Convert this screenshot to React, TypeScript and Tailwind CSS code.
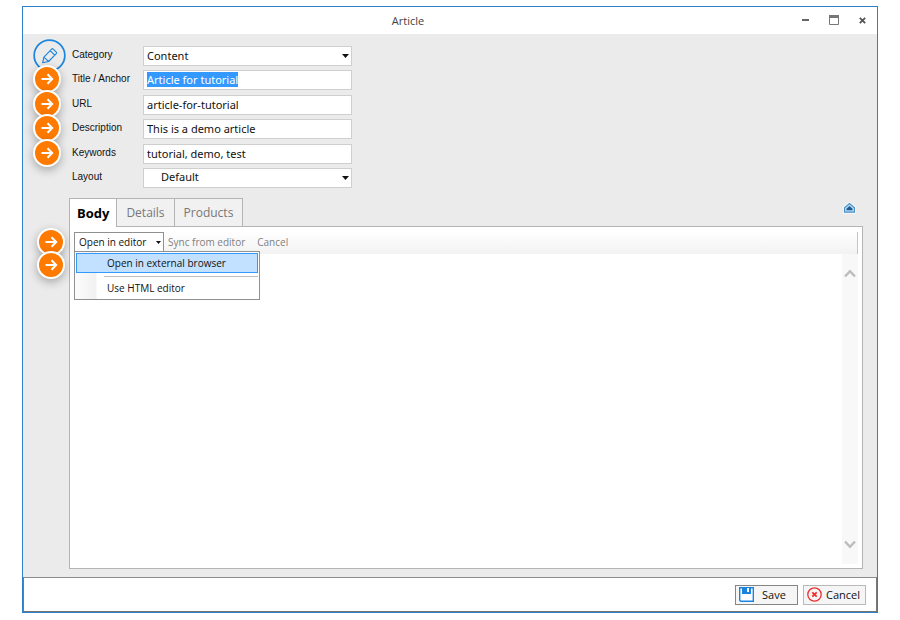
import { type ReactNode, useEffect, useRef, useState } from 'react';

const fieldCls =
  'block w-full h-5 px-[3px] pb-px bg-white border border-[#cfcfcf] font-["Noto_Sans",sans-serif] text-[11px] leading-4 text-[#111] outline-none selection:bg-[#3399ff] selection:text-white';

const toolCls = 'h-5 pl-1 pr-2 text-[10px] leading-4';

interface FieldProps {
  id: string;
  label: string;
  marked?: boolean;
  children: ReactNode;
}

function Marker() {
  return (
    <span className="flex w-7 h-7 items-center justify-center rounded-full border-2 border-white bg-[#ff7a00] shadow-[0_3px_10px_rgba(0,0,0,0.3)]">
      <svg width="14" height="14" viewBox="0 0 14 14" fill="none" stroke="#fff" strokeWidth="2" aria-hidden="true">
        <path d="M1.5 7H12M7.5 2.2L12.2 7L7.5 11.8" />
      </svg>
    </span>
  );
}

function Caret({ className }: { className: string }) {
  return (
    <svg className={className} width="7" height="4" viewBox="0 0 7 4" fill="#111" aria-hidden="true">
      <path d="M0 0H7L3.5 4Z" />
    </svg>
  );
}

function Field({ id, label, marked, children }: FieldProps) {
  return (
    <div className="relative flex items-center">
      {marked && (
        <div className="absolute -left-[39px] -top-[5px]">
          <Marker />
        </div>
      )}
      <label htmlFor={id} className="w-[71px] shrink-0 pb-[2px] text-[10px] leading-4 text-[#111] font-['Liberation_Sans',Arial,sans-serif]">
        {label}
      </label>
      <div className="relative flex-1">{children}</div>
    </div>
  );
}

function Chevron({ up }: { up?: boolean }) {
  return (
    <svg width="12" height="9" viewBox="0 0 12 9" fill="none" stroke="#bcbcbc" strokeWidth="2.4" aria-hidden="true">
      <path d={up ? 'M1 7.5L6 2.2L11 7.5' : 'M1 1.5L6 6.8L11 1.5'} />
    </svg>
  );
}

export default function App() {
  const titleRef = useRef<HTMLInputElement>(null);
  const [tab, setTab] = useState('Body');
  const [menuOpen, setMenuOpen] = useState(true);

  useEffect(() => {
    titleRef.current?.focus();
    titleRef.current?.select();
  }, []);

  return (
    <div className="h-screen bg-white pt-[6px] pb-[7px] pl-[22px] pr-[22px] font-['Open_Sans',sans-serif] text-[#222]">
      <div className="flex h-full flex-col border border-[#2f7fcb] bg-[#ebebeb]">
        <header className="relative flex h-[27px] shrink-0 items-center justify-center bg-white">
          <h1 className="mr-[84px] text-[11px] leading-4 text-[#444]">Article</h1>
          <div className="absolute right-2 top-[7px] flex gap-4">
            <button type="button" aria-label="Minimize" className="flex w-3 h-3 items-center">
              <svg width="8" height="12" viewBox="0 0 8 12"><path d="M1 5H8V7H1Z" fill="#666" /></svg>
            </button>
            <button type="button" aria-label="Maximize" className="flex w-3 h-3 items-center">
              <svg className="shrink-0" width="10" height="10" viewBox="0 0 10 10">
                <path d="M.5 .5H9.5V9.5H.5Z" fill="#fff" stroke="#777" />
                <path d="M0 0H10V3H0Z" fill="#777" />
              </svg>
            </button>
            <button type="button" aria-label="Close" className="flex w-3 h-3 items-center">
              <svg className="ml-[2px]" width="7" height="7" viewBox="0 0 7 7"><path d="M.8 .8L6.2 6.2M6.2 .8L.8 6.2" stroke="#555" strokeWidth="1.8" /></svg>
            </button>
          </div>
        </header>

        <main className="relative flex min-h-0 flex-1 flex-col pt-3 pb-2 pl-[46px] pr-[14px]">
          <div className="absolute left-[10px] top-[5px] text-[#1e86de]">
            <svg width="33" height="33" viewBox="0 0 34 34" fill="none" stroke="currentColor" aria-hidden="true">
              <circle cx="17" cy="17" r="15.8" strokeWidth="1.8" />
              <path d="M10 24.5L11.2 18.6L19.2 10.4Q20 9.6 20.8 10.4L24 13.5Q24.8 14.3 24 15.1L16 23.2Z M17.7 12L22.4 16.7M11.2 18.6L13.5 20.8L16 23.2" strokeWidth="1.2" strokeLinejoin="round" />
            </svg>
          </div>

          <form className="ml-[3px] flex h-[142px] w-[280px] shrink-0 flex-col justify-between" onSubmit={e => e.preventDefault()}>
            <Field id="category" label="Category">
              <select id="category" className={`${fieldCls} appearance-none`}>
                <option>Content</option>
              </select>
              <Caret className="pointer-events-none absolute right-[3px] top-2" />
            </Field>
            <Field id="title" label="Title / Anchor" marked>
              <input id="title" ref={titleRef} type="text" defaultValue="Article for tutorial" className={fieldCls} />
            </Field>
            <Field id="url" label="URL" marked>
              <input id="url" type="text" defaultValue="article-for-tutorial" className={fieldCls} />
            </Field>
            <Field id="description" label="Description" marked>
              <input id="description" type="text" defaultValue="This is a demo article" className={fieldCls} />
            </Field>
            <Field id="keywords" label="Keywords" marked>
              <input id="keywords" type="text" defaultValue="tutorial, demo, test" className={fieldCls} />
            </Field>
            <Field id="layout" label="Layout">
              <select id="layout" className={`${fieldCls} appearance-none indent-[14px]`}>
                <option>Default</option>
              </select>
              <Caret className="pointer-events-none absolute right-[3px] top-2" />
            </Field>
          </form>

          <div className="relative z-10 mt-[10px] flex shrink-0 items-end">
            <div role="tablist" className="-mb-px flex border-l border-t border-[#b4b4b4] leading-4">
              {['Body', 'Details', 'Products'].map(name => (
                <button
                  key={name}
                  type="button"
                  role="tab"
                  aria-selected={tab === name}
                  onClick={() => setTab(name)}
                  className={
                    tab === name
                      ? 'h-7 border-r border-[#b4b4b4] bg-white px-[7px] text-[13px] font-bold text-black'
                      : 'h-7 border-r border-b border-[#b4b4b4] bg-[#f1f1f1] px-[9px] text-[12px] text-[#777]'
                  }
                >
                  {name}
                </button>
              ))}
            </div>
            <button type="button" aria-label="Collapse" className="ml-auto mr-[7px] mb-3">
              <svg width="13" height="12" viewBox="0 0 13 12" aria-hidden="true">
                <path d="M6.5 1.3L12 5.8V10.6H1V5.8Z" fill="#d8ecfa" stroke="#fff" strokeWidth="2" />
                <path d="M6.5 1.5L11.5 5.8V10.2H1.5V5.8Z" fill="#b7daf2" stroke="#4a90c8" strokeWidth="1.2" />
                <path d="M6.5 4L9.5 6.8V8.2H3.5V6.8Z" fill="#1d5a94" />
              </svg>
            </button>
          </div>

          <section className="relative flex min-h-0 flex-1 flex-col border border-[#b4b4b4] bg-white p-1 pt-[5px]">
            <div className="absolute -left-[33px] top-px">
              <Marker />
            </div>
            <div className="absolute -left-[33px] top-6">
              <Marker />
            </div>

            <div className="relative flex h-[22px] shrink-0 items-start border-r border-[#c4c4c4] bg-linear-to-b from-white to-[#f2f2f2] text-[#808080]">
              <button
                type="button"
                aria-haspopup="menu"
                aria-expanded={menuOpen}
                onClick={() => setMenuOpen(!menuOpen)}
                className="flex h-5 w-[90px] items-center justify-between border border-b-0 border-[#909090] bg-white pl-1 pr-[2px] pb-px text-[10px] leading-4 text-[#111]"
              >
                Open in editor
                <svg width="5" height="3" viewBox="0 0 5 3" fill="#111" aria-hidden="true"><path d="M0 0H5L2.5 3Z" /></svg>
              </button>
              <button type="button" className={toolCls}>Sync from editor</button>
              <button type="button" className={toolCls}>Cancel</button>

              {menuOpen && (
                <div role="menu" className="absolute left-0 top-[19px] w-[186px] border border-[#909090] bg-linear-to-r from-[#fcfcfc] from-0% via-[#f1f1f1] via-[21px] to-white to-[22px] p-px text-[10px] leading-4 text-[#111]">
                  <button type="button" role="menuitem" className="block h-5 w-full border border-[#3399ff] bg-[#c2e0ff] pl-[30px] text-left">
                    Open in external browser
                  </button>
                  <hr className="ml-7 mt-[3px] mb-px border-[#bdbdbd]" />
                  <button type="button" role="menuitem" className="block h-5 w-full pl-[31px] text-left">
                    Use HTML editor
                  </button>
                </div>
              )}
            </div>

            <div className="flex min-h-0 flex-1">
              <textarea aria-label="Body" className="min-w-0 flex-1 resize-none p-1 text-[12px] outline-none" />
              <div className="flex w-4 flex-col items-center justify-between bg-[#f8f8f8] pt-[15px] pb-[15px]">
                <button type="button" aria-label="Scroll up"><Chevron up /></button>
                <button type="button" aria-label="Scroll down"><Chevron /></button>
              </div>
            </div>
          </section>
        </main>

        <footer className="flex h-[35px] shrink-0 items-center justify-end gap-[5px] border border-[#777] border-t-[#8c8c8c] bg-white pr-[10px] text-[11px] leading-4 text-[#111]">
          <button type="button" className="flex h-5 w-[63px] items-center border border-[#858585] bg-[#f5f5f5] pl-[3px]">
            <svg className="mr-2" width="15" height="15" viewBox="0 0 15 15" aria-hidden="true">
              <path d="M.7 .7H14.3V14.3H1.7L.7 13.3Z" fill="#fff" stroke="#1b83e2" strokeWidth="1.4" />
              <path d="M3 1H12V7H3Z" fill="#1b83e2" />
              <path d="M8 1H10V5H8Z" fill="#fff" />
            </svg>
            Save
          </button>
          <button type="button" className="flex h-5 w-[63px] items-center border border-[#b9b9b9] bg-[#f5f5f5] pl-[3px]">
            <svg className="mr-1 shrink-0" width="15" height="15" viewBox="0 0 15 15" fill="none" stroke="#ee2d2d" aria-hidden="true">
              <circle cx="7.5" cy="7.5" r="6.7" strokeWidth="1.3" />
              <path d="M5.3 5.3L9.7 9.7M9.7 5.3L5.3 9.7" strokeWidth="1.8" />
            </svg>
            Cancel
          </button>
        </footer>
      </div>
    </div>
  );
}
